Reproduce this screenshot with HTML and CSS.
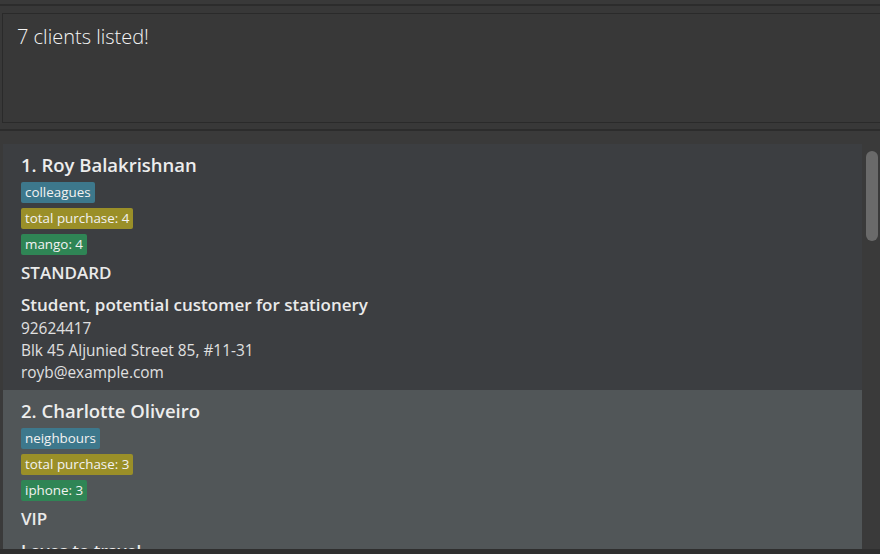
FILE: index.html
```html
<!DOCTYPE html>
<html>
<head>
<meta charset="utf-8">
<link rel="stylesheet" href="styles.css">
</head>
<body>
<div class="app">
  <div class="top-strip"></div>
  <div class="result-pane">
    <div class="result-box">7 clients listed!</div>
  </div>
  <div class="list-pane">
    <div class="list">
      <div class="card">
        <div class="name">1. Roy Balakrishnan</div>
        <div class="tags">
          <span class="tag tag-blue">colleagues</span>
          <span class="tag tag-olive">total purchase: 4</span>
          <span class="tag tag-green">mango: 4</span>
        </div>
        <div class="tier">STANDARD</div>
        <div class="note">Student, potential customer for stationery</div>
        <div class="detail">92624417</div>
        <div class="detail">Blk 45 Aljunied Street 85, #11-31</div>
        <div class="detail">royb@example.com</div>
      </div>
      <div class="card selected">
        <div class="name">2. Charlotte Oliveiro</div>
        <div class="tags">
          <span class="tag tag-blue">neighbours</span>
          <span class="tag tag-olive">total purchase: 3</span>
          <span class="tag tag-green">iphone: 3</span>
        </div>
        <div class="tier">VIP</div>
        <div class="note">Loves to travel</div>
        <div class="detail">93210283</div>
      </div>
    </div>
    <div class="scrollbar"><div class="thumb"></div></div>
  </div>
  <div class="bottom-strip"></div>
</div>
</body>
</html>
```
FILE: styles.css
```css
* { box-sizing: border-box; }
html, body { margin: 0; padding: 0; }
body {
  background: #383838;
  font-family: "Open Sans", "Noto Sans", sans-serif;
  color: #eeeeee;
  width: 880px;
  height: 554px;
  overflow: hidden;
}
.app { display: flex; flex-direction: column; height: 554px; }
.top-strip {
  height: 6px;
  border-bottom: 2px solid #2c2c2c;
  background: #393939;
  flex-shrink: 0;
}
.result-pane {
  padding: 7px 0 0 2px;
  height: 125px;
  border-bottom: 2px solid #2c2c2c;
  flex-shrink: 0;
}
.result-box {
  height: 110px;
  border: 1px solid #2a2a2a;
  border-right: none;
  background: #383838;
  padding: 10px 14px;
  font-size: 20px;
  font-weight: 300;
  color: #f4f4f4;
  line-height: 26px;
}
.list-pane {
  flex: 1;
  display: flex;
  padding: 13px 0 0 3px;
  min-height: 0;
  overflow: hidden;
  background: #3a3a3a;
}
.list { width: 859px; display: flex; flex-direction: column; }
.card {
  background: #3c3e41;
  padding: 9px 18px 8px;
  height: 246px;
  flex-shrink: 0;
}
.card.selected { background: #515658; }
.name {
  font-size: 18.5px;
  font-weight: 600;
  line-height: 24px;
  color: #ededed;
}
.tags { display: flex; flex-direction: column; align-items: flex-start; gap: 5px; margin-top: 5px; }
.tag {
  font-size: 13.4px;
  line-height: 15px;
  padding: 3px 4px;
  border-radius: 2px;
  color: #f2f2f2;
}
.tag-blue { background: #3d788c; }
.tag-olive { background: #9a8f28; }
.tag-green { background: #2f8555; }
.tier {
  font-size: 17px;
  font-weight: 600;
  line-height: 22px;
  margin-top: 7px;
  color: #eaeaea;
}
.note {
  font-size: 17px;
  font-weight: 600;
  line-height: 22px;
  margin-top: 10px;
  color: #eaeaea;
}
.detail {
  font-size: 15.4px;
  line-height: 22px;
  color: #e0e0e0;
}
.note + .detail { margin-top: 2px; }
.scrollbar {
  width: 18px;
  padding: 7px 2px 0 4px;
}
.thumb {
  width: 12px;
  height: 90px;
  background: #6a6a6a;
  border-radius: 6px;
}
.bottom-strip {
  height: 5px;
  background: #2f2f2f;
  flex-shrink: 0;
}
```
